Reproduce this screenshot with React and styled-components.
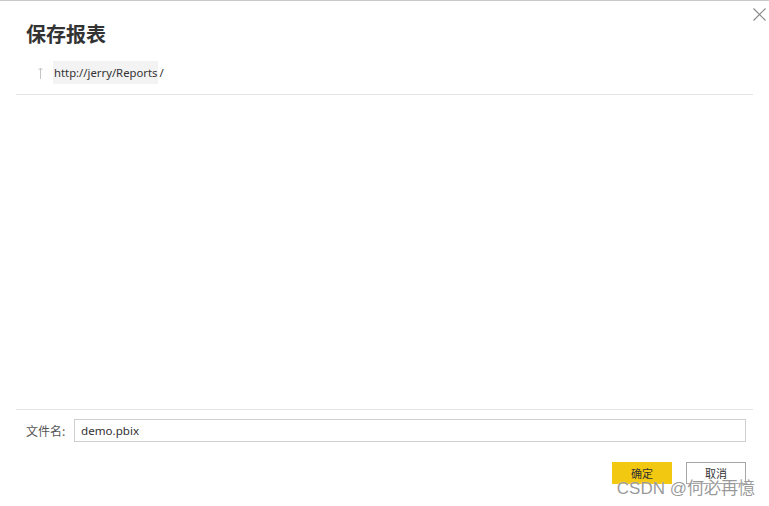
import React from 'react'
import styled, { createGlobalStyle } from 'styled-components'

const GlobalStyle = createGlobalStyle`
	html, body {
		margin: 0;
		padding: 0;
		background: #fff;
	}
	body {
		font-family: "Noto Sans", "Noto Sans CJK SC", sans-serif;
	}
`

const App = () => {
	return (
		<Dialog>
			<GlobalStyle />
			<Close aria-label="关闭">
				<svg width="13" height="13" viewBox="0 0 13 13">
					<path d="M0.5 0.5 L12.5 12.5 M12.5 0.5 L0.5 12.5" stroke="#8a8a8a" strokeWidth="1.2" fill="none" />
				</svg>
			</Close>
			<Header>
				<Title>保存报表</Title>
				<PathRow>
					<UpArrow>
						<svg width="5" height="12" viewBox="0 0 5 12">
							<path d="M2.5 1 L2.5 12 M0.5 3 L2.5 1 L4.5 3" stroke="#c4c4c4" strokeWidth="1" fill="none" />
						</svg>
					</UpArrow>
					<Crumb>http://jerry/Reports</Crumb>
					<Slash>/</Slash>
				</PathRow>
			</Header>
			<Content />
			<Footer>
				<FileRow>
					<Label>文件名:</Label>
					<Input defaultValue="demo.pbix" />
				</FileRow>
				<Actions>
					<Button primary>确定</Button>
					<Button>取消</Button>
				</Actions>
			</Footer>
			<Watermark>CSDN @何必再憶</Watermark>
		</Dialog>
	)
}

const Dialog = styled.div`
	position: relative;
	box-sizing: border-box;
	width: 769px;
	height: 506px;
	display: flex;
	flex-direction: column;
	border-top: 1px solid #c8c8c8;
	background: #fff;
	overflow: hidden;
`

const Close = styled.button`
	position: absolute;
	top: 7px;
	right: 3px;
	padding: 0;
	border: none;
	background: none;
	line-height: 0;
	cursor: pointer;
`

const Header = styled.div`
	margin: 0 16px;
	padding: 0 10px;
	height: 93px;
	border-bottom: 1px solid #e3e3e3;
`

const Title = styled.h1`
	margin: 0;
	padding-top: 19px;
	font-size: 20px;
	line-height: 28px;
	font-weight: 700;
	color: #333;
	font-family: "Noto Sans CJK SC", sans-serif;
`

const PathRow = styled.div`
	display: flex;
	align-items: center;
	margin-top: 13px;
	padding-left: 12px;
	height: 23px;
`

const UpArrow = styled.span`
	display: flex;
	align-items: center;
	margin-right: 10px;
`

const Crumb = styled.span`
	display: flex;
	align-items: center;
	height: 23px;
	padding: 0 1px;
	background: #f3f3f3;
	font-size: 11.3px;
	color: #333;
	font-family: "Noto Sans", sans-serif;
`

const Slash = styled.span`
	font-size: 11.5px;
	color: #333;
	margin-left: 1px;
	font-family: "Noto Sans", sans-serif;
`

const Content = styled.div`
	flex: 1;
`

const Footer = styled.div`
	margin: 0 16px;
	border-top: 1px solid #e3e3e3;
	height: 97px;
	box-sizing: border-box;
`

const FileRow = styled.div`
	display: flex;
	align-items: center;
	padding: 9px 7px 0 10px;
`

const Label = styled.span`
	width: 48px;
	font-size: 12px;
	color: #555;
	font-family: "Noto Sans CJK SC", sans-serif;
`

const Input = styled.input`
	flex: 1;
	box-sizing: border-box;
	height: 23px;
	border: 1px solid #cfcfcf;
	padding: 0 6px;
	font-size: 11.6px;
	color: #333;
	font-family: "Noto Sans", sans-serif;
	outline: none;
`

const Actions = styled.div`
	display: flex;
	justify-content: flex-end;
	gap: 14px;
	padding: 20px 7px 0 0;
`

const Button = styled.button`
	box-sizing: border-box;
	width: 60px;
	height: 22px;
	padding: 0;
	font-size: 11px;
	color: #333;
	font-family: "Noto Sans CJK SC", sans-serif;
	border: 1px solid ${({ primary }) => (primary ? '#f2c811' : '#a6a6a6')};
	background: ${({ primary }) => (primary ? '#f2c811' : '#fff')};
	cursor: pointer;
`

const Watermark = styled.div`
	position: absolute;
	right: 14px;
	bottom: 6px;
	font-size: 17px;
	line-height: 22px;
	color: rgba(120, 120, 120, 0.75);
	text-shadow: 0 0 1px #fff;
	font-family: "Liberation Sans", "Noto Sans CJK SC", sans-serif;
	pointer-events: none;
`

export default App
